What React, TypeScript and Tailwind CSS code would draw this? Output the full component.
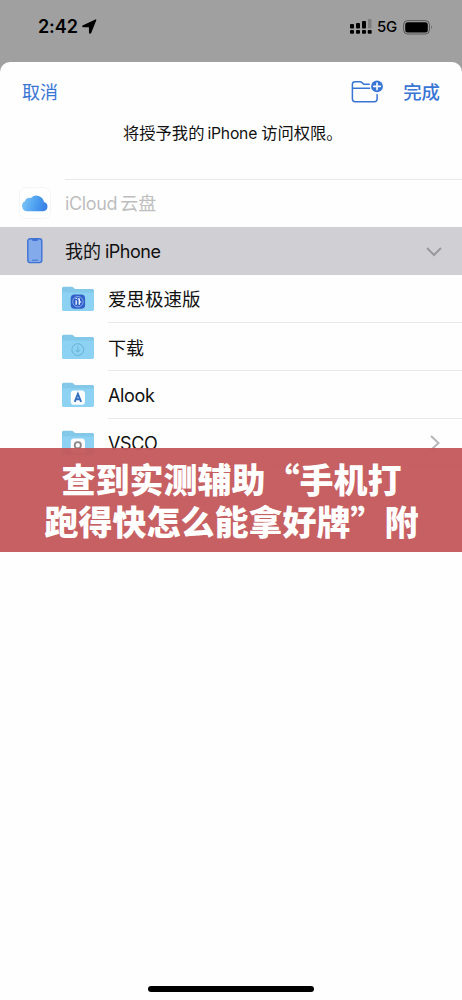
import type { ReactNode } from 'react';

function StatusBar() {
  return (
    <header className="flex h-[62px] items-start justify-between bg-[#a0a0a0] pt-[15px] pr-[29px] pl-[38px] text-black">
      <div className="flex h-6 items-center gap-[5px]">
        <span className="w-[39px] text-[18px] leading-6 font-semibold tracking-[-0.1px]">2:42</span>
        <svg className="-mt-0.5" width="15" height="15" viewBox="0 0 15 15">
          <path d="M13.7 1 8.6 13.7q-.7.9-1-.2V7.7H1.4Q.3 7.4 1.3 6.8Z" fill="currentColor" stroke="currentColor" strokeWidth="1.3" strokeLinejoin="round" />
        </svg>
      </div>
      <div className="flex h-6 items-center">
        <svg width="22" height="16" viewBox="0 0 22 16" fill="currentColor">
          <rect x="0" y="5" width="4" height="4.5" rx="1" />
          <rect x="6" y="4" width="4" height="5.5" rx="1" />
          <rect x="12" y="2" width="4" height="7.5" rx="1" />
          <rect x="18" y="0" width="3.5" height="9.5" rx="1" opacity=".22" />
          <rect x="0" y="11" width="4" height="3.7" rx="1" />
          <rect x="6" y="11" width="4" height="3.7" rx="1" />
          <rect x="12" y="11" width="4" height="3.7" rx="1" />
          <rect x="17.7" y="11" width="4" height="3.7" rx="1" />
        </svg>
        <span className="ml-[5px] w-[21px] text-[15px] leading-6 font-medium tracking-[-0.3px]">5G</span>
        <svg className="ml-[5px]" width="30" height="15" viewBox="0 0 30 15">
          <rect x=".6" y=".6" width="25.8" height="13.4" rx="4" fill="none" stroke="#000" strokeOpacity=".45" />
          <rect x="2.2" y="2.2" width="22.6" height="10.2" rx="2.5" />
          <path d="M28 5q1.6 2.3 0 4.6Z" fillOpacity=".5" />
        </svg>
      </div>
    </header>
  );
}

function NewFolderIcon() {
  return (
    <svg width="33" height="24" viewBox="0 0 33 24" fill="none" stroke="#3975d4" strokeWidth="1.5" strokeLinecap="round" strokeLinejoin="round">
      <path d="M18.2 4.2h-5.5L10.7 2.4Q10 1.7 9 1.7H4Q1.4 1.7 1.4 4.3V19q0 2.7 2.7 2.7h19.3q2.7 0 2.7-2.7v-4.6" />
      <path d="M1.6 8.2h17" />
      <circle cx="26" cy="6.4" r="5.9" fill="#3975d4" stroke="none" />
      <path d="M26 3.1v6.6M22.7 6.4h6.6" stroke="#fff" strokeWidth="1.6" />
    </svg>
  );
}

function CloudIcon() {
  return (
    <span className="flex size-8 items-center justify-center rounded-[7px] border border-[#f5f5f5] bg-white">
      <svg width="28" height="18" viewBox="0 0 28 18" className="shrink-0">
        <defs>
          <linearGradient id="cloud" x1="0" y1=".4" x2="1" y2=".6">
            <stop offset="0" stopColor="#7fc6f7" />
            <stop offset=".55" stopColor="#4c9ff0" />
            <stop offset="1" stopColor="#397fe5" />
          </linearGradient>
        </defs>
        <path d="M6.3 17.3a5.3 5.3 0 0 1-2.4-10 4.4 4.4 0 0 1 6-3.3A7.7 7.7 0 0 1 23 8.1a4.7 4.7 0 0 1-.7 9.2Z" fill="url(#cloud)" />
      </svg>
    </span>
  );
}

function PhoneIcon() {
  return (
    <svg width="16" height="26" viewBox="0 0 16 26" fill="none">
      <rect x=".8" y=".8" width="14" height="23.8" rx="2.3" fill="#83aaea" stroke="#3e73d3" strokeWidth="1.4" />
      <path d="M5 1h6v1.1q0 .8-.8.8H5.8Q5 2.9 5 2.1Z" fill="#3e73d3" />
      <path d="M5 22.2h6" stroke="#3e73d3" strokeWidth="1" />
    </svg>
  );
}

function Folder({ children }: { children: ReactNode }) {
  return (
    <svg width="32" height="26" viewBox="0 0 32 26" className="shrink-0">
      <path d="M0 2.2Q0 .7 1.5.7h8q1.1 0 1.9.8l1 .9q.6.7 1.7.7h16.3Q32 3.1 32 4.7V10H0Z" fill="#83c8e8" />
      <path d="M0 6.5h32v16.8q0 1.6-1.6 1.6H1.6Q0 24.9 0 23.3Z" fill="#8ed2f3" />
      {children}
    </svg>
  );
}

const folders = [
  {
    name: '爱思极速版',
    text: 'pt-[3px] text-[18.5px]',
    badge: (
      <g fill="none">
        <rect x="8.7" y="8.6" width="14.4" height="14.2" rx="3.8" fill="#3260c9" />
        <circle cx="15.9" cy="15.7" r="5.2" stroke="#8fb2ee" strokeWidth=".9" />
        <path d="M14.2 14.3v4.4M14.2 12v1M17.3 18.8v-6.2M17.3 12.9h-1.6M17.3 16h1.8" stroke="#e9f1ff" strokeWidth="1.4" />
      </g>
    ),
  },
  {
    name: '下载',
    text: 'pt-[3px]',
    badge: (
      <g fill="none" stroke="#65b4d8" strokeWidth="1">
        <circle cx="15.8" cy="15.6" r="5.9" />
        <path d="M15.8 12.6v5.4M13.5 16l2.3 2.3 2.3-2.3" />
      </g>
    ),
  },
  {
    name: 'Alook',
    text: 'pt-px tracking-[-0.35px]',
    badge: (
      <>
        <rect x="8.8" y="8.6" width="14.2" height="14.2" rx="3.4" fill="#fcfeff" />
        <path d="m12.7 19.8 3.2-8 3.2 8M13.9 17.3h4" fill="none" stroke="#326fc1" strokeWidth="1.9" />
      </>
    ),
  },
  {
    name: 'VSCO',
    text: 'pt-px tracking-[-0.35px]',
    more: true,
    badge: (
      <>
        <rect x="8.8" y="8.6" width="14.2" height="14.2" rx="3.4" fill="#fafafa" />
        <circle cx="15.8" cy="15.2" r="3.1" fill="none" stroke="#8d8686" strokeWidth="1.8" />
      </>
    ),
  },
];

export default function App() {
  return (
    <div className="relative flex h-[1000px] w-[462px] flex-col overflow-hidden bg-[#a0a0a0] font-[Inter,'Noto_Sans_CJK_SC',sans-serif]">
      <StatusBar />
      <main className="flex flex-1 flex-col rounded-t-[10px] bg-[#fefefe]">
        <div className="flex h-[60px] items-center pr-[22px] pl-[22px] text-[18px] text-[#3975d4]">
          <button className="pt-0.5 leading-6">取消</button>
          <span className="ml-auto">
            <NewFolderIcon />
          </span>
          <button className="ml-[19px] text-[18.4px] leading-6 font-medium">完成</button>
        </div>
        <p className="h-[57px] pt-px pl-[123px] text-[16.3px] leading-5 whitespace-nowrap text-[#111]">
          将授予我的<span className="mr-[4px] ml-[3px] text-[15.7px] tracking-[-0.2px]">iPhone</span>访问权限。
        </p>

        <div className="flex h-12 items-center pl-[19px]">
          <div className="w-[46px]">
            <CloudIcon />
          </div>
          <div className="flex h-full flex-1 items-center border-t border-[#e8e8e9] text-[18px] text-[#bebebf]">
            <span className="mr-[3px] tracking-[-0.35px]">iCloud</span>云盘
          </div>
        </div>
        <div className="flex h-12 items-center bg-[#d0cfd4] pr-5 pl-[27px] text-[18px] text-[#111]">
          <div className="w-[38px]">
            <PhoneIcon />
          </div>
          <span>
            我的<span className="ml-[4px] tracking-[-0.5px]">iPhone</span>
          </span>
          <svg className="mt-0.5 ml-auto" width="16" height="10" viewBox="0 0 16 10" fill="none">
            <path d="m1 1 7 7 7-7" stroke="#99999d" strokeWidth="2" />
          </svg>
        </div>

        <ul>
          {folders.map(folder => (
            <li key={folder.name} className="flex h-12 items-center pl-[62px]">
              <Folder>{folder.badge}</Folder>
              <div className="ml-[14px] flex h-full flex-1 items-center justify-between border-b border-[#e8e8e9] pr-[22px] text-[18px] text-[#111]">
                <span className={folder.text}>{folder.name}</span>
                {folder.more && (
                  <svg width="10" height="16" viewBox="0 0 10 16" fill="none">
                    <path d="m1 1 7.5 7L1 15" stroke="#b7b7ba" strokeWidth="2" />
                  </svg>
                )}
              </div>
            </li>
          ))}
        </ul>
        <div className="mx-auto mt-auto mb-[8px] h-[6px] w-[166px] rounded-full bg-black" />
      </main>

      <h1 className="absolute top-[448px] left-0 h-[104px] w-full bg-[#c4575a]/95 pt-[10px] pl-px text-center font-['Noto_Sans_CJK_SC',sans-serif] text-[34px] leading-[42px] font-black whitespace-nowrap text-white">
        查到实测辅助“手机打
        <br />
        跑得快怎么能拿好牌”附
      </h1>
    </div>
  );
}
